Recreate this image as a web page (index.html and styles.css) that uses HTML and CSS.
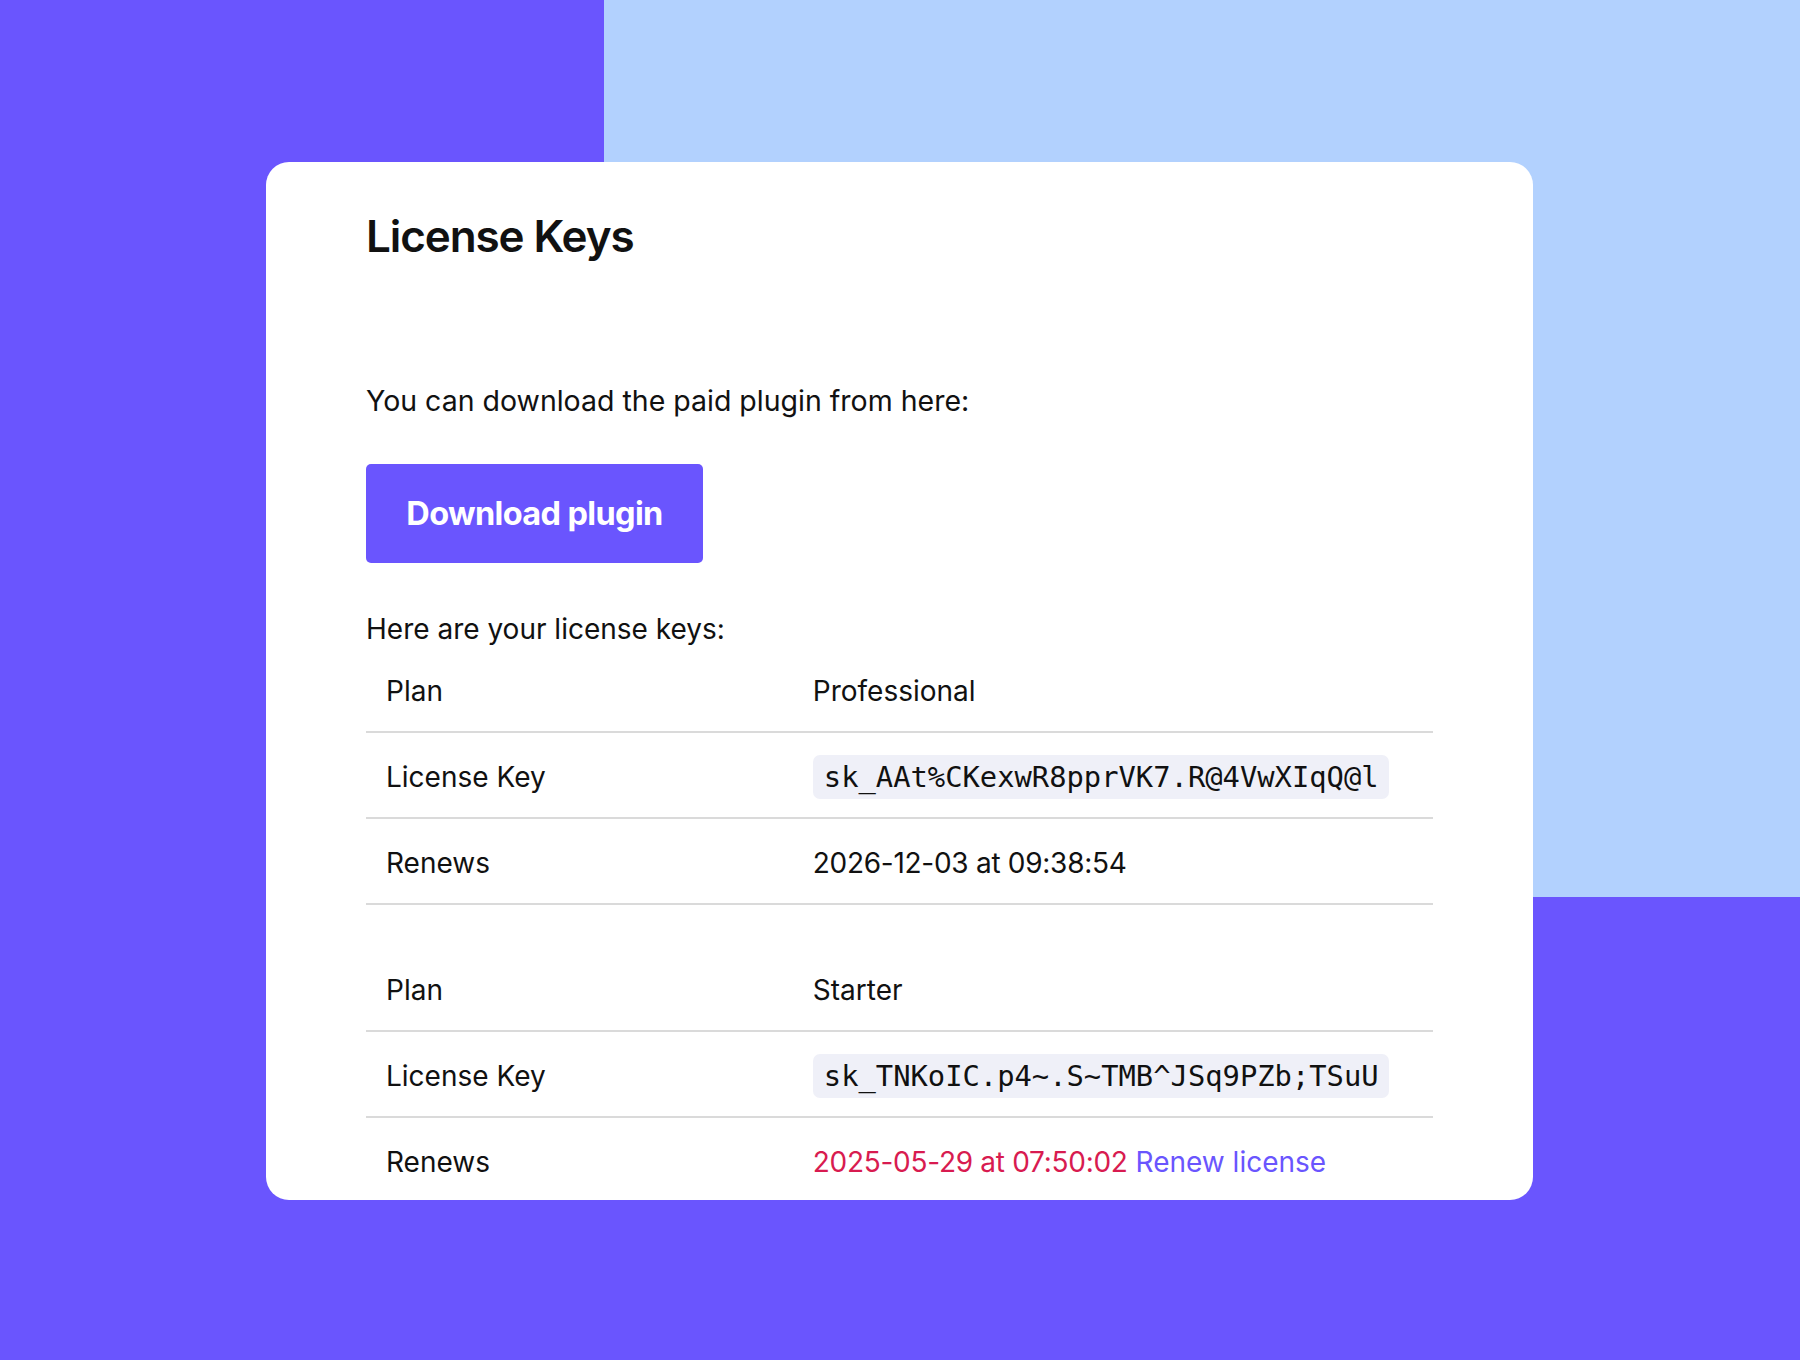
FILE: index.html
```html
<!DOCTYPE html>
<html>
<head>
<title>License Keys</title>

<link rel="stylesheet" href="styles.css">

</head>

<body>

    <div id="page">

        <div id="card">

            <h1 class="title">License Keys</h1>

            <p class="intro">You can download the paid plugin from here:</p>

            <a href="#" class="btn">Download plugin</a>

            <p class="keys-label">Here are your license keys:</p>

            <table class="keys">
                <tr>
                    <td class="label">Plan</td>
                    <td>Professional</td>
                </tr>
                <tr>
                    <td class="label">License Key</td>
                    <td><code class="key">sk_AAt%CKexwR8pprVK7.R@4VwXIqQ@l</code></td>
                </tr>
                <tr>
                    <td class="label">Renews</td>
                    <td><span class="date">2026-12-03 at 09:38:54</span></td>
                </tr>
            </table>

            <table class="keys">
                <tr>
                    <td class="label">Plan</td>
                    <td>Starter</td>
                </tr>
                <tr>
                    <td class="label">License Key</td>
                    <td><code class="key">sk_TNKoIC.p4~.S~TMB^JSq9PZb;TSuU</code></td>
                </tr>
                <tr>
                    <td class="label">Renews</td>
                    <td><span class="date expired">2025-05-29 at 07:50:02</span> <a href="#" class="renew">Renew license</a></td>
                </tr>
            </table>

        </div>

    </div>

</body>

</html>
```

FILE: styles.css
```css
html, body {
    margin: 0;
    height: 100%;
}

body {
    font-family: Inter, "Open Sans", sans-serif;
    color: #111;
    background: linear-gradient(#b2d1fe, #b2d1fe) right top / 1196px 897px no-repeat, #6a55fe;
}

#page {
    padding: 162px 0 0 266px;
}

#card {
    width: 1267px;
    height: 1038px;
    box-sizing: border-box;
    padding: 47px 100px 0 100px;
    background-color: white;
    border-radius: 23px;
    overflow: hidden;
}

.title {
    margin: 0;
    font-size: 44px;
    font-weight: 600;
    line-height: 54px;
    letter-spacing: -0.025em;
}

.intro,
.keys-label {
    margin: 0;
    font-size: 28px;
    line-height: 36px;
}

.intro {
    margin-top: 120px;
    font-size: 28.5px;
}

.btn {
    display: flex;
    align-items: center;
    justify-content: center;
    width: 337px;
    height: 99px;
    margin-top: 45px;
    background-color: #6a55fe;
    border-radius: 5px;
    color: white;
    font-size: 32.5px;
    font-weight: 700;
    letter-spacing: -0.02em;
    text-decoration: none;
}

.keys-label {
    margin-top: 48px;
}

.keys {
    width: 100%;
    border-collapse: collapse;
    font-size: 28px;
    margin-bottom: 41px;
}

.keys td {
    height: 81px;
    padding: 3px 20px 0 20px;
    border-bottom: 2px solid #dadada;
}

.keys .label {
    width: 40%;
}

.date {
    letter-spacing: -0.01em;
}

.key {
    display: inline-block;
    padding: 5px 10px 5px 11px;
    background-color: #eff0f8;
    border-radius: 7px;
    font-family: "DejaVu Sans Mono", "Liberation Mono", monospace;
    font-size: 28.8px;
    line-height: 34px;
}

.expired {
    color: #d81b50;
}

.renew {
    color: #6a55fe;
    text-decoration: none;
}
```
